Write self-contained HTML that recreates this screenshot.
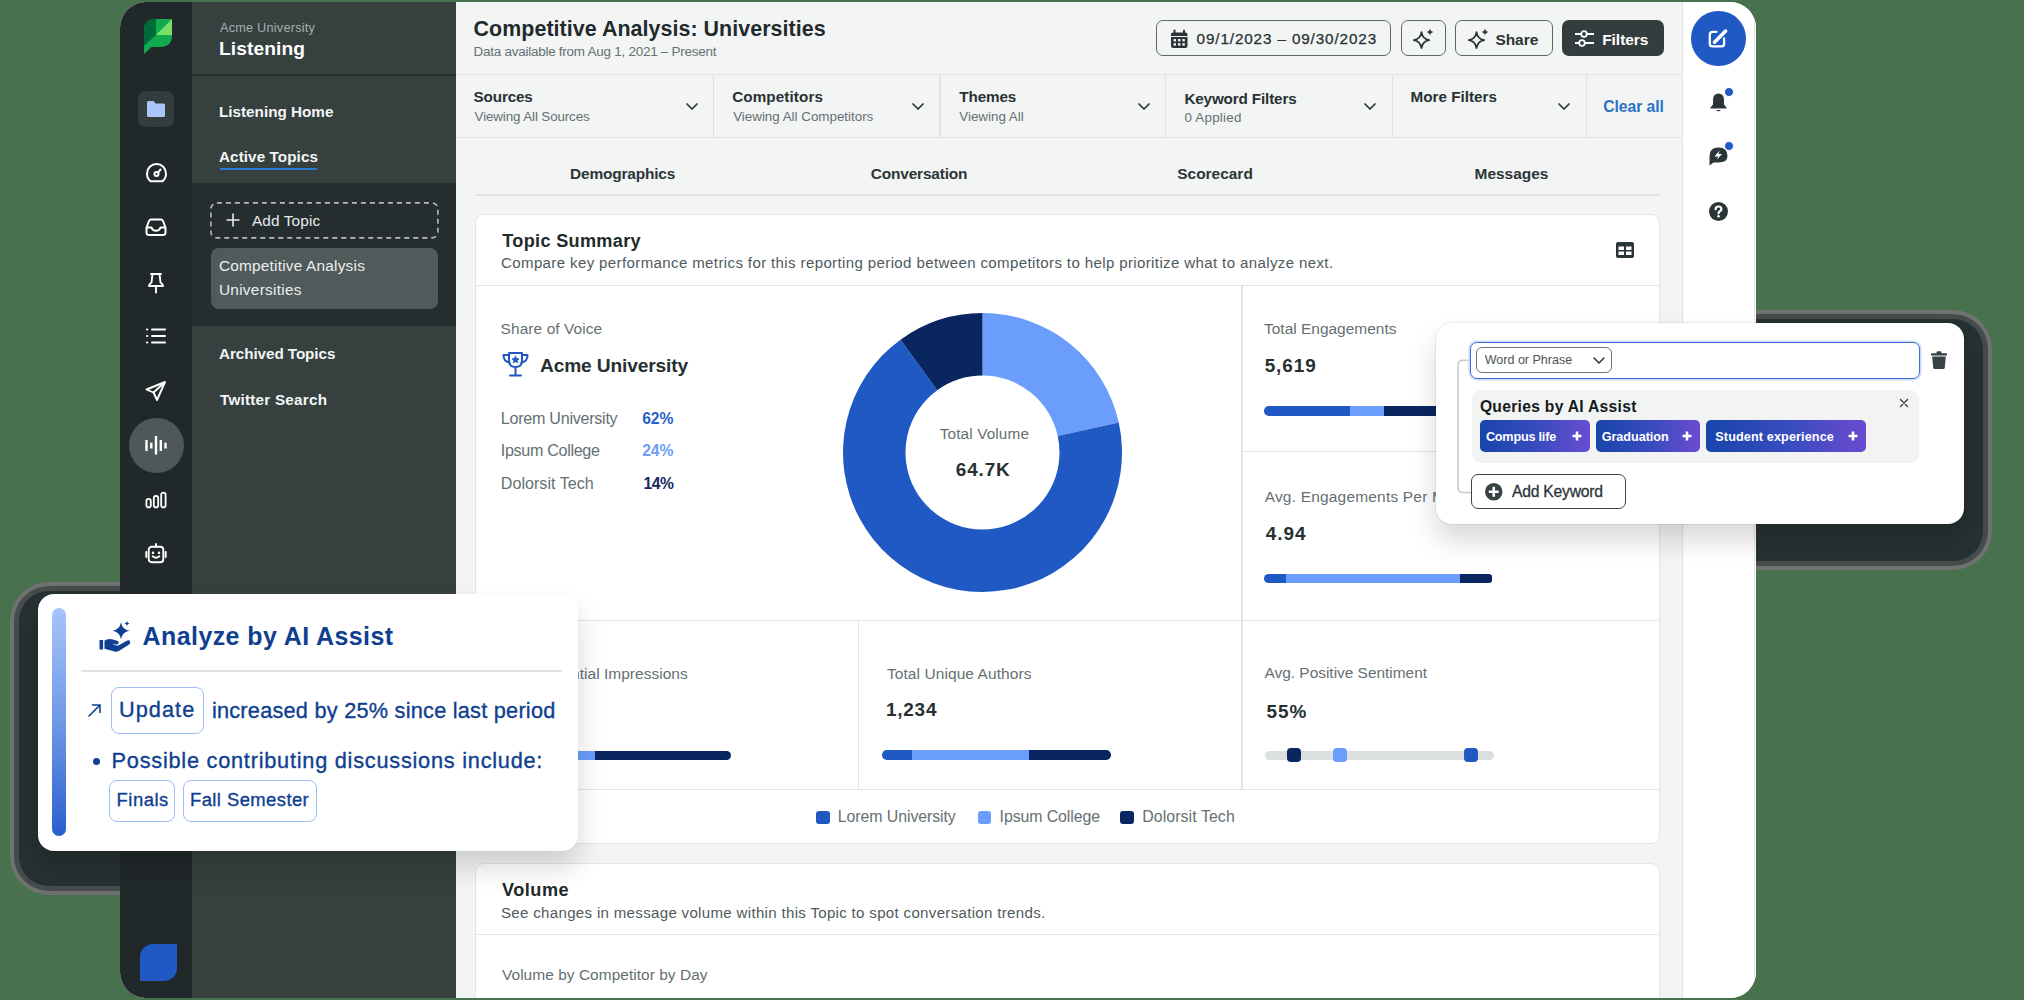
<!DOCTYPE html>
<html><head><meta charset="utf-8">
<style>
*{box-sizing:border-box;margin:0;padding:0}
html,body{width:2024px;height:1000px;overflow:hidden}
body{background:#48714e;position:relative;font-family:"Liberation Sans",sans-serif;color:#283133}
.a{position:absolute}
.t{position:absolute;white-space:nowrap;line-height:1}
svg{position:absolute;overflow:visible}
</style></head>
<body>
<div class="a" style="left:19px;top:591px;width:578px;height:295px;border-radius:30px;background:#273032;box-shadow:0 0 0 5px #464b4c, 0 0 0 9px #707272"></div>
<div class="a" style="left:1416px;top:319px;width:567px;height:242px;border-radius:30px;background:#273032;box-shadow:0 0 0 5px #464b4c, 0 0 0 9px #707272"></div>
<div class="a" style="left:120px;top:2px;width:1636px;height:996px;border-radius:26px;overflow:hidden;background:#f3f4f4">
 <div class="a" style="left:0;top:0;width:72px;height:100%;background:#212829"></div>
 <div class="a" style="left:72px;top:0;width:264px;height:100%;background:#35403f"></div>
 <div class="a" style="left:72px;top:72px;width:264px;height:1.5px;background:#262e30"></div>
 <div class="a" style="left:72px;top:181px;width:264px;height:143px;background:#252d2f"></div>
 <div class="a" style="left:1562px;top:0;width:74px;height:100%;background:#fff;border-left:1px solid #e1e4e4"></div>
 <div class="a" style="left:1634px;top:20px;width:1px;height:955px;background:#e3e6e6"></div>
</div>
<svg style="left:144px;top:19px" width="28" height="35" viewBox="0 0 28 35">
  <clipPath id="lc"><path d="M10,0H28V18A10,10 0 0 1 18,28H7.5L0,35V10A10,10 0 0 1 10,0Z"/></clipPath>
  <g clip-path="url(#lc)"><rect width="28" height="35" fill="#10aa4f"/><polygon points="0,0 12,0 12,16 0,27" fill="#006b3a"/><polygon points="12,16 28,0 28,16" fill="#78df69"/></g></svg>
<div class="a" style="left:138px;top:91px;width:36px;height:36px;border-radius:8px;background:#343d3e"></div>
<svg style="left:146px;top:100px" width="20" height="18" viewBox="0 0 20 18"><path d="M1,2.5Q1,1 2.5,1H7.5L9.5,3.5H17.5Q19,3.5 19,5V15.5Q19,17 17.5,17H2.5Q1,17 1,15.5Z" fill="#a9c5fa"/></svg>
<svg style="left:145.5px;top:163px" width="21" height="20" viewBox="0 0 21 20" fill="none" stroke="#fff" stroke-width="2" stroke-linecap="round" stroke-linejoin="round"><path d="M4.5,18.2Q1,15.5 1,10.5A9.5,9.5 0 0 1 20,10.5Q20,15.5 16.5,18.2Z"/><circle cx="10.5" cy="11" r="2"/><path d="M12,9.5L14.5,6.5"/></svg>
<svg style="left:145px;top:218px" width="22" height="19" viewBox="0 0 22 19" fill="none" stroke="#fff" stroke-width="2" stroke-linejoin="round"><path d="M1.5,9.5L4,3Q4.6,1.5 6.2,1.5H15.8Q17.4,1.5 18,3L20.5,9.5V14.5Q20.5,17 18,17H4Q1.5,17 1.5,14.5Z"/><path d="M1.5,9.5H6.5Q7.5,12.8 11,12.8Q14.5,12.8 15.5,9.5H20.5"/></svg>
<svg style="left:146px;top:272px" width="20" height="22" viewBox="0 0 20 22" fill="none" stroke="#fff" stroke-width="1.9" stroke-linecap="round" stroke-linejoin="round"><path d="M5,2H15M6.5,2L5.5,10.5Q3,12 3,14H17Q17,12 14.5,10.5L13.5,2M10,14V20.5"/></svg>
<svg style="left:146px;top:327px" width="20" height="18" viewBox="0 0 20 18" fill="none" stroke="#fff" stroke-width="2" stroke-linecap="round"><path d="M1,2.5H1.3M1,9H1.3M1,15.5H1.3M6,2.5H19M6,9H19M6,15.5H19"/></svg>
<svg style="left:145px;top:380px" width="22" height="22" viewBox="0 0 22 22" fill="none" stroke="#fff" stroke-width="1.9" stroke-linejoin="round"><path d="M20,2L1.5,9.5L8.5,12.5L12,20Z"/><path d="M8.5,12.5L20,2"/></svg>
<div class="a" style="left:129px;top:418px;width:55px;height:55px;border-radius:50%;background:#4e5859"></div>
<svg style="left:144px;top:434px" width="24" height="22" viewBox="0 0 24 22" fill="none" stroke="#fff" stroke-width="2.4" stroke-linecap="butt"><path d="M2.5,6V17M7.3,8.7V14.4M12,1.9V20.5M16.8,6V17M21.5,8.7V14.4"/></svg>
<svg style="left:145px;top:491px" width="22" height="18" viewBox="0 0 22 18" fill="none" stroke="#fff" stroke-width="1.8"><rect x="1.4" y="7.8" width="4.4" height="8.6" rx="2.2"/><rect x="8.8" y="5" width="4.4" height="11.4" rx="2.2"/><rect x="16.2" y="1.6" width="4.4" height="14.8" rx="2.2"/></svg>
<svg style="left:145px;top:543px" width="22" height="21" viewBox="0 0 22 21" fill="none" stroke="#fff" stroke-width="1.9" stroke-linecap="round"><rect x="3.7" y="3.7" width="14.6" height="15.6" rx="3"/><path d="M11,1V3.5M1.3,9V14M20.7,9V14"/><path d="M8,9.6V9.9M14,9.6V9.9" stroke-width="2.4"/><path d="M7.7,13.3Q11,16.3 14.3,13.3"/></svg>
<div class="a" style="left:140px;top:944px;width:37px;height:37px;background:#2059c4;border-radius:13px 0 13px 0"></div>
<div class="t" style="left:220.00px;top:21.90px;color:#a7aeae;font-size:12.72px;letter-spacing:0.214px;">Acme University</div>
<div class="t" style="left:219.00px;top:38.60px;color:#ffffff;font-size:19.16px;font-weight:700;letter-spacing:0.100px;">Listening</div>
<div class="t" style="left:219.00px;top:103.60px;color:#f4f6f6;font-size:15.24px;font-weight:700;letter-spacing:0.008px;">Listening Home</div>
<div class="t" style="left:219.00px;top:149.20px;color:#f4f6f6;font-size:15.24px;font-weight:700;letter-spacing:0.083px;">Active Topics</div>
<div class="a" style="left:219.5px;top:167.8px;width:97px;height:2.4px;background:#2a7ad6"></div>
<svg style="left:210px;top:202px" width="229" height="37" viewBox="0 0 229 37"><rect x="0.9" y="0.9" width="227" height="35" rx="6" fill="none" stroke="#b5bbbb" stroke-width="1.6" stroke-dasharray="5 4"/></svg>
<svg style="left:226px;top:213px" width="14" height="14" viewBox="0 0 14 14" stroke="#e8ebeb" stroke-width="1.6"><path d="M7,0.5V13.5M0.5,7H13.5"/></svg>
<div class="t" style="left:252.00px;top:212.80px;color:#e6e9e9;font-size:15.37px;letter-spacing:0.125px;">Add Topic</div>
<div class="a" style="left:210.5px;top:247.5px;width:227.5px;height:61px;border-radius:8px;background:#4f5a5b"></div>
<div class="t" style="left:219.00px;top:258.30px;color:#eceeee;font-size:15.37px;letter-spacing:0.216px;">Competitive Analysis</div>
<div class="t" style="left:219.00px;top:282.30px;color:#eceeee;font-size:15.37px;letter-spacing:0.273px;">Universities</div>
<div class="t" style="left:219.00px;top:346.40px;color:#f4f6f6;font-size:15.24px;font-weight:700;letter-spacing:-0.071px;">Archived Topics</div>
<div class="t" style="left:220.00px;top:391.80px;color:#f4f6f6;font-size:15.24px;font-weight:700;letter-spacing:0.238px;">Twitter Search</div>
<div class="t" style="left:473.60px;top:18.70px;color:#1f2a2c;font-size:21.42px;font-weight:700;letter-spacing:0.055px;">Competitive Analysis: Universities</div>
<div class="t" style="left:473.60px;top:45.00px;color:#657072;font-size:13.46px;letter-spacing:-0.248px;">Data available from Aug 1, 2021 &ndash; Present</div>
<div class="a" style="left:1156px;top:20px;width:235px;height:36px;border-radius:7px;border:1.4px solid #5f6869"></div>
<svg style="left:1170.5px;top:29.5px" width="16.5" height="18" viewBox="0 0 16.5 18"><path d="M3.5,0.5V3M13,0.5V3" stroke="#2b3436" stroke-width="2" stroke-linecap="round"/><path d="M0,4.5Q0,2.5 2,2.5H14.5Q16.5,2.5 16.5,4.5V6H0Z M0,7H16.5V16Q16.5,18 14.5,18H2Q0,18 0,16Z" fill="#2b3436"/><g fill="#f3f4f4"><rect x="2.6" y="9" width="2.4" height="2.4"/><rect x="7" y="9" width="2.4" height="2.4"/><rect x="11.4" y="9" width="2.4" height="2.4"/><rect x="2.6" y="13.2" width="2.4" height="2.4"/><rect x="7" y="13.2" width="2.4" height="2.4"/><rect x="11.4" y="13.2" width="2.4" height="2.4"/></g></svg>
<div class="t" style="left:1196.60px;top:30.50px;color:#263032;font-size:15.26px;letter-spacing:0.876px;-webkit-text-stroke:0.25px #263032;">09/1/2023 &ndash; 09/30/2023</div>
<div class="a" style="left:1400.5px;top:20px;width:45px;height:36px;border-radius:7px;border:1.4px solid #5f6869"></div>
<svg style="left:1413px;top:28.5px" width="20" height="19" viewBox="0 0 20 19"><path d="M8.5,3.2Q9.6,10.2 16.2,11.2Q9.6,12.2 8.5,19.2Q7.4,12.2 0.8,11.2Q7.4,10.2 8.5,3.2Z" fill="none" stroke="#2b3436" stroke-width="1.7" stroke-linejoin="round"/><path d="M17,-0.5Q17.5,2.5 20.5,3Q17.5,3.5 17,6.5Q16.5,3.5 13.5,3Q16.5,2.5 17,-0.5Z" fill="#2b3436"/></svg>
<div class="a" style="left:1455px;top:20px;width:97.5px;height:36px;border-radius:7px;border:1.4px solid #5f6869"></div>
<svg style="left:1467.5px;top:28.5px" width="20" height="19" viewBox="0 0 20 19"><path d="M8.5,3.2Q9.6,10.2 16.2,11.2Q9.6,12.2 8.5,19.2Q7.4,12.2 0.8,11.2Q7.4,10.2 8.5,3.2Z" fill="none" stroke="#2b3436" stroke-width="1.7" stroke-linejoin="round"/><path d="M17,-0.5Q17.5,2.5 20.5,3Q17.5,3.5 17,6.5Q16.5,3.5 13.5,3Q16.5,2.5 17,-0.5Z" fill="#2b3436"/></svg>
<div class="t" style="left:1495.40px;top:31.50px;color:#2a3335;font-size:15.45px;font-weight:700;">Share</div>
<div class="a" style="left:1562px;top:20px;width:101.5px;height:36px;border-radius:7px;background:#343d3e"></div>
<svg style="left:1574.5px;top:29px" width="19" height="19" viewBox="0 0 19 19" fill="none" stroke="#fff" stroke-width="1.8"><path d="M0,5H6M12,5H19M0,14H4M10,14H19"/><circle cx="9" cy="5" r="2.8"/><circle cx="7" cy="14" r="2.8"/></svg>
<div class="t" style="left:1602.20px;top:31.50px;color:#ffffff;font-size:15.45px;font-weight:700;letter-spacing:-0.017px;">Filters</div>
<div class="a" style="left:456px;top:73.5px;width:1227px;height:1.2px;background:#e0e3e3"></div>
<div class="a" style="left:456px;top:136.8px;width:1227px;height:1.2px;background:#e0e3e3"></div>
<div class="a" style="left:713.2px;top:74px;width:1.2px;height:63px;background:#e0e3e3"></div>
<div class="a" style="left:939.4px;top:74px;width:1.2px;height:63px;background:#e0e3e3"></div>
<div class="a" style="left:1165.2px;top:74px;width:1.2px;height:63px;background:#e0e3e3"></div>
<div class="a" style="left:1391.6px;top:74px;width:1.2px;height:63px;background:#e0e3e3"></div>
<div class="a" style="left:1585.6px;top:74px;width:1.2px;height:63px;background:#e0e3e3"></div>
<div class="t" style="left:473.60px;top:89.00px;color:#283133;font-size:15.24px;font-weight:700;letter-spacing:-0.150px;">Sources</div>
<div class="t" style="left:474.60px;top:109.70px;color:#657072;font-size:13.36px;letter-spacing:-0.111px;">Viewing All Sources</div>
<svg style="left:686px;top:103px" width="12" height="7" viewBox="0 0 12 7"><path d="M1,1L6,6L11,1" fill="none" stroke="#2b3436" stroke-width="1.7" stroke-linecap="round" stroke-linejoin="round"/></svg>
<div class="t" style="left:732.20px;top:89.00px;color:#283133;font-size:15.24px;font-weight:700;letter-spacing:0.100px;">Competitors</div>
<div class="t" style="left:733.20px;top:109.70px;color:#657072;font-size:13.36px;">Viewing All Competitors</div>
<svg style="left:912px;top:103px" width="12" height="7" viewBox="0 0 12 7"><path d="M1,1L6,6L11,1" fill="none" stroke="#2b3436" stroke-width="1.7" stroke-linecap="round" stroke-linejoin="round"/></svg>
<div class="t" style="left:959.30px;top:89.00px;color:#283133;font-size:15.24px;font-weight:700;letter-spacing:-0.120px;">Themes</div>
<div class="t" style="left:959.30px;top:109.70px;color:#657072;font-size:13.36px;">Viewing All</div>
<svg style="left:1138px;top:103px" width="12" height="7" viewBox="0 0 12 7"><path d="M1,1L6,6L11,1" fill="none" stroke="#2b3436" stroke-width="1.7" stroke-linecap="round" stroke-linejoin="round"/></svg>
<div class="t" style="left:1184.40px;top:90.50px;color:#283133;font-size:15.24px;font-weight:700;letter-spacing:-0.143px;">Keyword Filters</div>
<div class="t" style="left:1184.40px;top:110.50px;color:#657072;font-size:13.36px;letter-spacing:0.250px;">0 Applied</div>
<svg style="left:1364px;top:103px" width="12" height="7" viewBox="0 0 12 7"><path d="M1,1L6,6L11,1" fill="none" stroke="#2b3436" stroke-width="1.7" stroke-linecap="round" stroke-linejoin="round"/></svg>
<div class="t" style="left:1410.50px;top:89.30px;color:#283133;font-size:15.24px;font-weight:700;">More Filters</div>
<svg style="left:1558px;top:103px" width="12" height="7" viewBox="0 0 12 7"><path d="M1,1L6,6L11,1" fill="none" stroke="#2b3436" stroke-width="1.7" stroke-linecap="round" stroke-linejoin="round"/></svg>
<div class="t" style="left:1603.20px;top:98.80px;color:#2a72c6;font-size:15.66px;font-weight:700;letter-spacing:-0.025px;">Clear all</div>
<div class="t" style="left:570.10px;top:166.10px;color:#2c3537;font-size:15.45px;font-weight:700;letter-spacing:-0.182px;">Demographics</div>
<div class="t" style="left:870.80px;top:166.10px;color:#2c3537;font-size:15.45px;font-weight:700;letter-spacing:-0.182px;">Conversation</div>
<div class="t" style="left:1177.30px;top:166.10px;color:#2c3537;font-size:15.45px;font-weight:700;">Scorecard</div>
<div class="t" style="left:1474.60px;top:166.10px;color:#2c3537;font-size:15.45px;font-weight:700;">Messages</div>
<div class="a" style="left:475px;top:194px;width:1185px;height:1.5px;background:#e1e4e4"></div>
<div class="a" style="left:1691px;top:11px;width:54.5px;height:54.5px;border-radius:50%;background:#2059c4"></div>
<svg style="left:1708px;top:28px" width="20" height="20" viewBox="0 0 20 20" fill="none" stroke="#fff" stroke-width="2.3" stroke-linecap="round" stroke-linejoin="round"><path d="M8.5,3.8H4.5Q1.8,3.8 1.8,6.5V15.7Q1.8,18.4 4.5,18.4H13.4Q16.1,18.4 16.1,15.7V10.5"/><path d="M6.5,14.2L17.6,3.1" stroke-width="3.6"/></svg>
<svg style="left:1709.5px;top:92px" width="17" height="20" viewBox="0 0 17 20"><path d="M8.5,1.5Q14,1.5 14,8V12.5L16.5,15.5V16.5H0.5V15.5L3,12.5V8Q3,1.5 8.5,1.5Z" fill="#2b3436"/><path d="M6,18Q8.5,20.5 11,18Z" fill="#2b3436"/></svg>
<div class="a" style="left:1723.5px;top:86.5px;width:10px;height:10px;border-radius:50%;background:#2059c4;border:1.2px solid #fff"></div>
<svg style="left:1708.5px;top:147px" width="19" height="19" viewBox="0 0 19 19"><path d="M9.5,0.5Q18.5,0.5 18.5,9Q18.5,15.5 9.5,15.5H4.5L0.5,18.5V9Q0.5,0.5 9.5,0.5Z" fill="#2b3436"/><path d="M10.5,3.5L5.5,9.5H9L8,12.5L13,7H9.5Z" fill="#fff"/></svg>
<div class="a" style="left:1723.5px;top:141px;width:10px;height:10px;border-radius:50%;background:#2059c4;border:1.2px solid #fff"></div>
<svg style="left:1708.5px;top:201.5px" width="19" height="19" viewBox="0 0 19 19"><circle cx="9.5" cy="9.5" r="9.5" fill="#2b3436"/><path d="M6.6,7.3Q6.6,4.5 9.5,4.5Q12.4,4.5 12.4,7Q12.4,8.6 10.6,9.5Q9.5,10.1 9.5,11.3" fill="none" stroke="#fff" stroke-width="2.2" stroke-linecap="round"/><circle cx="9.5" cy="14.3" r="1.3" fill="#fff"/></svg>
<div class="a" style="left:474.5px;top:213.5px;width:1185.5px;height:630.5px;border-radius:9px;background:#fff;border:1.3px solid #e3e5e5"></div>
<div class="t" style="left:502.30px;top:231.60px;color:#1f2a2c;font-size:18.13px;font-weight:700;letter-spacing:0.317px;">Topic Summary</div>
<div class="t" style="left:501.00px;top:254.70px;color:#4f5a5c;font-size:15.05px;letter-spacing:0.371px;">Compare key performance metrics for this reporting period between competitors to help prioritize what to analyze next.</div>
<svg style="left:1615.5px;top:241.5px" width="18" height="16" viewBox="0 0 18 16"><rect x="0" y="0" width="18" height="16" rx="2" fill="#2b3436"/><g fill="#fff"><rect x="2.5" y="4.5" width="5.5" height="3.5"/><rect x="10" y="4.5" width="5.5" height="3.5"/><rect x="2.5" y="9.5" width="5.5" height="3.5"/><rect x="10" y="9.5" width="5.5" height="3.5"/></g></svg>
<div class="a" style="left:475px;top:284.8px;width:1184px;height:1.3px;background:#e3e5e5"></div>
<div class="a" style="left:1241.4px;top:285px;width:1.3px;height:505px;background:#e3e5e5"></div>
<div class="a" style="left:1242px;top:451px;width:418px;height:1.3px;background:#e3e5e5"></div>
<div class="a" style="left:475px;top:619.8px;width:1184px;height:1.3px;background:#e3e5e5"></div>
<div class="a" style="left:857.6px;top:620px;width:1.3px;height:169px;background:#e3e5e5"></div>
<div class="a" style="left:475px;top:788.6px;width:1184px;height:1.3px;background:#e3e5e5"></div>
<div class="t" style="left:500.60px;top:320.60px;color:#657072;font-size:15.48px;letter-spacing:0.077px;">Share of Voice</div>
<svg style="left:501.5px;top:351.5px" width="27" height="25" viewBox="0 0 27 25" fill="none" stroke="#2059c4" stroke-width="2" stroke-linejoin="round" stroke-linecap="round"><path d="M7,1H20V8.5Q20,15 13.5,15Q7,15 7,8.5Z"/><path d="M7,3H1.5Q1.5,9.5 7.5,10.5M20,3H25.5Q25.5,9.5 19.5,10.5"/><path d="M13.5,15V22.5M8,23.5H19"/><path d="M13.5,4.2L14.6,6.5L17,6.8L15.2,8.4L15.7,10.8L13.5,9.6L11.3,10.8L11.8,8.4L10,6.8L12.4,6.5Z" fill="#2059c4" stroke-width="0.8"/></svg>
<div class="t" style="left:540.00px;top:355.60px;color:#263032;font-size:19.16px;font-weight:700;letter-spacing:-0.143px;">Acme University</div>
<div class="t" style="left:500.80px;top:409.50px;color:#657072;font-size:16.11px;letter-spacing:-0.267px;">Lorem University</div>
<div class="t" style="left:642.20px;top:410.50px;color:#2a5fc7;font-size:15.66px;font-weight:700;letter-spacing:-0.050px;">62%</div>
<div class="t" style="left:500.80px;top:442.00px;color:#657072;font-size:16.11px;letter-spacing:-0.325px;">Ipsum College</div>
<div class="t" style="left:642.20px;top:443.00px;color:#6c9ef8;font-size:15.66px;font-weight:700;letter-spacing:-0.050px;">24%</div>
<div class="t" style="left:500.80px;top:475.00px;color:#657072;font-size:16.11px;letter-spacing:0.008px;">Dolorsit Tech</div>
<div class="t" style="left:643.50px;top:476.00px;color:#112a61;font-size:15.66px;font-weight:700;letter-spacing:-0.500px;">14%</div>
<svg style="left:0;top:0" width="2024" height="1000" viewBox="0 0 2024 1000"><path d="M982.50,313.00A139.5,139.5 0 0 1 1118.75,422.54L1057.70,435.97A77,77 0 0 0 982.50,375.50Z" fill="#6a9dfc"/><path d="M1118.75,422.54A139.5,139.5 0 1 1 900.50,339.64L937.24,390.21A77,77 0 1 0 1057.70,435.97Z" fill="#2059c4"/><path d="M900.50,339.64A139.5,139.5 0 0 1 982.50,313.00L982.50,375.50A77,77 0 0 0 937.24,390.21Z" fill="#0a2660"/></svg>
<div class="t" style="left:939.80px;top:426.00px;color:#657072;font-size:15.37px;letter-spacing:0.109px;">Total Volume</div>
<div class="t" style="left:955.80px;top:461.00px;color:#263032;font-size:18.95px;font-weight:700;letter-spacing:0.850px;">64.7K</div>
<div class="t" style="left:1264.00px;top:320.90px;color:#657072;font-size:15.48px;">Total Engagements</div>
<div class="t" style="left:1264.70px;top:356.50px;color:#263032;font-size:18.95px;font-weight:700;letter-spacing:0.900px;">5,619</div>
<div class="a" style="left:1264px;top:406px;width:229px;height:9.5px;border-radius:4.75px;overflow:hidden;display:flex"><div style="width:85.5px;height:100%;background:#2059c4;flex:none"></div><div style="width:34.3px;height:100%;background:#6a9dfc;flex:none"></div><div style="width:109.2px;height:100%;background:#0a2660;flex:none"></div></div>
<div class="t" style="left:1264.70px;top:489.20px;color:#657072;font-size:15.48px;letter-spacing:0.2px;">Avg. Engagements Per Message</div>
<div class="t" style="left:1265.70px;top:524.80px;color:#263032;font-size:18.95px;font-weight:700;letter-spacing:0.967px;">4.94</div>
<div class="a" style="left:1263.5px;top:574.3px;width:229px;height:9px;border-radius:4.5px;overflow:hidden;display:flex"><div style="width:22.0px;height:100%;background:#2059c4;flex:none"></div><div style="width:174.3px;height:100%;background:#6a9dfc;flex:none"></div><div style="width:32.7px;height:100%;background:#0a2660;flex:none"></div></div>
<div class="t" style="left:502.00px;top:665.50px;color:#657072;font-size:15.48px;letter-spacing:0.031px;">Total Potential Impressions</div>
<div class="t" style="left:501.00px;top:700.50px;color:#263032;font-size:18.95px;font-weight:700;letter-spacing:1.200px;">37,567</div>
<div class="a" style="left:502px;top:750.5px;width:229px;height:9.5px;border-radius:4.75px;overflow:hidden;display:flex"><div style="width:38.0px;height:100%;background:#2059c4;flex:none"></div><div style="width:54.6px;height:100%;background:#6a9dfc;flex:none"></div><div style="width:136.4px;height:100%;background:#0a2660;flex:none"></div></div>
<div class="t" style="left:886.90px;top:665.50px;color:#657072;font-size:15.48px;letter-spacing:0.095px;">Total Unique Authors</div>
<div class="t" style="left:885.90px;top:700.50px;color:#263032;font-size:18.95px;font-weight:700;letter-spacing:0.800px;">1,234</div>
<div class="a" style="left:881.7px;top:750px;width:229.5px;height:9.5px;border-radius:4.75px;overflow:hidden;display:flex"><div style="width:30.3px;height:100%;background:#2059c4;flex:none"></div><div style="width:117.4px;height:100%;background:#6a9dfc;flex:none"></div><div style="width:81.8px;height:100%;background:#0a2660;flex:none"></div></div>
<div class="t" style="left:1264.50px;top:665.00px;color:#657072;font-size:15.48px;letter-spacing:-0.023px;">Avg. Positive Sentiment</div>
<div class="t" style="left:1266.50px;top:703.00px;color:#263032;font-size:18.95px;font-weight:700;letter-spacing:1.000px;">55%</div>
<div class="a" style="left:1264.5px;top:750.5px;width:229.5px;height:9px;border-radius:4.5px;background:#dcdfdf"></div>
<div class="a" style="left:1287px;top:748px;width:14px;height:14px;border-radius:4px;background:#0a2660"></div>
<div class="a" style="left:1332.5px;top:748px;width:14px;height:14px;border-radius:4px;background:#6a9dfc"></div>
<div class="a" style="left:1464px;top:748px;width:14px;height:14px;border-radius:4px;background:#2059c4"></div>
<div class="a" style="left:816px;top:810.6px;width:13.5px;height:13.3px;border-radius:3px;background:#2059c4"></div>
<div class="t" style="left:837.80px;top:809.40px;color:#657072;font-size:15.90px;letter-spacing:-0.080px;">Lorem University</div>
<div class="a" style="left:977.8px;top:810.6px;width:13.5px;height:13.3px;border-radius:3px;background:#6a9dfc"></div>
<div class="t" style="left:999.60px;top:809.40px;color:#657072;font-size:15.90px;letter-spacing:-0.092px;">Ipsum College</div>
<div class="a" style="left:1120.4px;top:810.6px;width:13.5px;height:13.3px;border-radius:3px;background:#0a2660"></div>
<div class="t" style="left:1142.20px;top:809.40px;color:#657072;font-size:15.90px;letter-spacing:0.083px;">Dolorsit Tech</div>
<div class="a" style="left:474.5px;top:862.8px;width:1185.5px;height:135.2px;border-radius:9px 9px 0 0;background:#fff;border:1.3px solid #e3e5e5;border-bottom:none"></div>
<div class="t" style="left:502.00px;top:881.30px;color:#1f2a2c;font-size:18.13px;font-weight:700;letter-spacing:0.500px;">Volume</div>
<div class="t" style="left:501.00px;top:904.50px;color:#4f5a5c;font-size:15.05px;letter-spacing:0.323px;">See changes in message volume within this Topic to spot conversation trends.</div>
<div class="a" style="left:475px;top:933.5px;width:1184px;height:1.3px;background:#e3e5e5"></div>
<div class="t" style="left:502.00px;top:967.00px;color:#657072;font-size:15.48px;letter-spacing:0.035px;">Volume by Competitor by Day</div>
<div class="a" style="left:1435.5px;top:322.5px;width:528px;height:201.5px;border-radius:16px;background:#fff;box-shadow:0 16px 28px rgba(0,0,0,0.16), 0 0 0 1px rgba(0,0,0,0.06)"></div>
<svg style="left:1456px;top:358px" width="20" height="137" viewBox="0 0 20 137" fill="none" stroke="#c4c9c9" stroke-width="1.5"><path d="M15,2.2H7Q2,2.2 2,7.2V129.5Q2,134.5 7,134.5H15"/></svg>
<div class="a" style="left:1470px;top:341.5px;width:450px;height:37px;border-radius:7px;border:1.6px solid #3b70d6;box-shadow:0 0 0 1.6px #cbdaf6"></div>
<div class="a" style="left:1476px;top:347px;width:135.5px;height:26px;border-radius:6px;border:1.3px solid #6d7577"></div>
<div class="t" style="left:1484.80px;top:354.30px;color:#4a5355;font-size:12.51px;">Word or Phrase</div>
<svg style="left:1592.5px;top:357px" width="12" height="7" viewBox="0 0 12 7"><path d="M1,1L6,6L11,1" fill="none" stroke="#2b3436" stroke-width="1.5" stroke-linecap="round" stroke-linejoin="round"/></svg>
<svg style="left:1930.5px;top:351px" width="16" height="18" viewBox="0 0 16 18"><path d="M5.5,1.5Q5.5,0.3 6.7,0.3H9.3Q10.5,0.3 10.5,1.5V2.2H15Q16,2.2 16,3.2V4.5H0V3.2Q0,2.2 1,2.2H5.5Z" fill="#384143"/><path d="M1.2,5.5H14.8L13.8,16.5Q13.7,18 12.2,18H3.8Q2.3,18 2.2,16.5Z" fill="#384143"/></svg>
<div class="a" style="left:1471.5px;top:389.5px;width:447.5px;height:73px;border-radius:9px;background:#f2f3f3"></div>
<div class="t" style="left:1479.90px;top:398.90px;color:#141a1b;font-size:15.66px;font-weight:700;letter-spacing:0.284px;">Queries by AI Assist</div>
<svg style="left:1900px;top:399px" width="8" height="8" viewBox="0 0 8 8" stroke="#384143" stroke-width="1.4" stroke-linecap="round"><path d="M0.5,0.5L7.5,7.5M7.5,0.5L0.5,7.5"/></svg>
<div class="a" style="left:1480.2px;top:419.6px;width:109.9px;height:32.5px;border-radius:5px;background:linear-gradient(90deg,#1945ab,#3a4cc0 55%,#6a4bd1)"></div>
<div class="t" style="left:1485.90px;top:430.60px;color:#ffffff;font-size:12.67px;font-weight:700;letter-spacing:-0.210px;">Compus life</div>
<svg style="left:1572px;top:431px" width="10" height="10" viewBox="0 0 10 10"><path d="M5,0.5V9.5M0.5,5H9.5" stroke="#fff" stroke-width="2.6"/></svg>
<div class="a" style="left:1596.1px;top:419.6px;width:103.7px;height:32.5px;border-radius:5px;background:linear-gradient(90deg,#1945ab,#3a4cc0 55%,#6a4bd1)"></div>
<div class="t" style="left:1601.70px;top:430.60px;color:#ffffff;font-size:12.67px;font-weight:700;letter-spacing:-0.056px;">Graduation</div>
<svg style="left:1682px;top:431px" width="10" height="10" viewBox="0 0 10 10"><path d="M5,0.5V9.5M0.5,5H9.5" stroke="#fff" stroke-width="2.6"/></svg>
<div class="a" style="left:1706.1px;top:419.6px;width:160.0px;height:32.5px;border-radius:5px;background:linear-gradient(90deg,#1945ab,#3a4cc0 55%,#6a4bd1)"></div>
<div class="t" style="left:1715.30px;top:430.60px;color:#ffffff;font-size:12.67px;font-weight:700;letter-spacing:0.106px;">Student experience</div>
<svg style="left:1848px;top:431px" width="10" height="10" viewBox="0 0 10 10"><path d="M5,0.5V9.5M0.5,5H9.5" stroke="#fff" stroke-width="2.6"/></svg>
<div class="a" style="left:1471.4px;top:474px;width:154.5px;height:35px;border-radius:7px;border:1.5px solid #3c4547"></div>
<svg style="left:1484.5px;top:483px" width="17.5" height="17.5" viewBox="0 0 17.5 17.5"><circle cx="8.75" cy="8.75" r="8.75" fill="#384143"/><path d="M8.75,3.8V13.7M3.8,8.75H13.7" stroke="#fff" stroke-width="2.6"/></svg>
<div class="t" style="left:1511.90px;top:484.00px;color:#2c3537;font-size:15.69px;letter-spacing:-0.220px;-webkit-text-stroke:0.3px #2c3537;">Add Keyword</div>
<div class="a" style="left:38px;top:594px;width:540px;height:257px;border-radius:16px;background:#fff;box-shadow:0 16px 28px rgba(0,0,0,0.16)"></div>
<div class="a" style="left:52.2px;top:608px;width:14px;height:228px;border-radius:7px;background:linear-gradient(180deg,#a6c4fa,#6f98e6 50%,#2a5fcf)"></div>
<svg style="left:99px;top:621px" width="32" height="32" viewBox="0 0 32 32" fill="#0f3f91"><rect x="0.5" y="19" width="3.6" height="9.5"/><path d="M5.5,19.5Q9,17.3 13,18.3L18.2,19.8Q20.2,20.5 19.6,22.3Q19,23.8 17,23.4L12.6,22.6L16.6,24.3Q18.3,25 20.2,24L27.8,19.8Q30.3,18.6 31.2,20.6Q31.8,22.5 29.8,23.8L19.8,30Q17.7,31.2 15.5,30.6L5.5,27.8Z"/><path d="M22,1.3Q23.2,8.6 30.4,9.8Q23.2,11 22,18.3Q20.8,11 13.6,9.8Q20.8,8.6 22,1.3Z"/><path d="M28,0Q28.4,2.1 30.5,2.5Q28.4,2.9 28,5Q27.6,2.9 25.5,2.5Q27.6,2.1 28,0Z"/></svg>
<div class="t" style="left:142.60px;top:623.80px;color:#0f3f91;font-size:24.93px;font-weight:700;letter-spacing:0.447px;">Analyze by AI Assist</div>
<div class="a" style="left:80.6px;top:670.3px;width:481.5px;height:1.5px;background:#dfe2e2"></div>
<svg style="left:88px;top:704px" width="13" height="13" viewBox="0 0 13 13" fill="none" stroke="#0f3f91" stroke-width="1.6" stroke-linecap="round"><path d="M1,12L12,1M4.5,1H12V8.5"/></svg>
<div class="a" style="left:111.4px;top:686.8px;width:92.4px;height:47px;border-radius:8px;border:1.8px solid #9dbdf5"></div>
<div class="t" style="left:118.90px;top:698.90px;color:#0f3f91;font-size:21.73px;letter-spacing:1.060px;-webkit-text-stroke:0.35px #0f3f91;">Update</div>
<div class="t" style="left:211.90px;top:699.50px;color:#0f3f91;font-size:21.73px;letter-spacing:0.236px;-webkit-text-stroke:0.35px #0f3f91;">increased by 25% since last period</div>
<div class="a" style="left:93px;top:757.9px;width:7px;height:7px;border-radius:50%;background:#0f3f91"></div>
<div class="t" style="left:111.60px;top:749.60px;color:#0f3f91;font-size:21.73px;letter-spacing:0.761px;-webkit-text-stroke:0.35px #0f3f91;">Possible contributing discussions include:</div>
<div class="a" style="left:109.3px;top:780.4px;width:66.1px;height:42px;border-radius:8px;border:1.8px solid #9dbdf5"></div>
<div class="t" style="left:116.60px;top:791.40px;color:#0f3f91;font-size:18.44px;letter-spacing:0.480px;-webkit-text-stroke:0.35px #0f3f91;">Finals</div>
<div class="a" style="left:182.6px;top:780.4px;width:134px;height:42px;border-radius:8px;border:1.8px solid #9dbdf5"></div>
<div class="t" style="left:190.00px;top:791.40px;color:#0f3f91;font-size:18.44px;letter-spacing:0.417px;-webkit-text-stroke:0.35px #0f3f91;">Fall Semester</div>
</body></html>
